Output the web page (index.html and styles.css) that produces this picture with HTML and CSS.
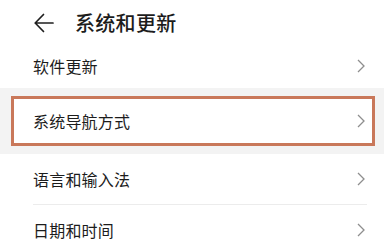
FILE: index.html
```html
<!DOCTYPE html>
<html lang="zh-CN">
<head>
<meta charset="utf-8">
<link rel="stylesheet" href="styles.css">
</head>
<body>
<header class="top">
  <svg class="back" width="20" height="20" viewBox="0 0 20 20" aria-hidden="true">
    <path d="M9.5 1.5 L1.2 10 L9.5 18.5 M1.2 10 H19" fill="none" stroke="#1f1f1f" stroke-width="1.7" stroke-linecap="round" stroke-linejoin="round"/>
  </svg>
  <h1 class="title">系统和更新</h1>
</header>
<ul class="list">
  <li class="row first">
    <span class="label">软件更新</span>
    <svg class="chev" width="8" height="14" viewBox="0 0 8 14"><path d="M1 1 L7 7 L1 13" fill="none" stroke="#8e8e8e" stroke-width="1.3"/></svg>
  </li>
  <li class="highlight">
    <div class="box">
      <span class="label">系统导航方式</span>
      <svg class="chev" width="8" height="14" viewBox="0 0 8 14"><path d="M1 1 L7 7 L1 13" fill="none" stroke="#8e8e8e" stroke-width="1.3"/></svg>
    </div>
  </li>
  <li class="row tall divided">
    <span class="label">语言和输入法</span>
    <svg class="chev" width="8" height="14" viewBox="0 0 8 14"><path d="M1 1 L7 7 L1 13" fill="none" stroke="#8e8e8e" stroke-width="1.3"/></svg>
  </li>
  <li class="row tall">
    <span class="label">日期和时间</span>
    <svg class="chev" width="8" height="14" viewBox="0 0 8 14"><path d="M1 1 L7 7 L1 13" fill="none" stroke="#8e8e8e" stroke-width="1.3"/></svg>
  </li>
</ul>
</body>
</html>
```
FILE: styles.css
```css
* { box-sizing: border-box; }
html, body { margin: 0; padding: 0; }
body {
  width: 384px;
  height: 248px;
  overflow: hidden;
  background: #ffffff;
  font-family: "Noto Sans CJK SC", "Noto Sans", sans-serif;
  color: #1c1c1c;
}
.top {
  height: 44px;
  display: flex;
  align-items: center;
  padding-left: 34px;
  padding-top: 1px;
}
.back { flex: none; }
.title {
  margin: 0 0 0 21px;
  font-size: 20px;
  font-weight: 500;
  line-height: 24px;
  letter-spacing: 0.3px;
}
.list {
  list-style: none;
  margin: 0;
  padding: 0;
}
.row {
  display: flex;
  align-items: center;
  justify-content: space-between;
  margin: 0 19px 0 33px;
  height: 44px;
}
.row.tall { height: 50px; }
.row.divided { height: 51px; border-bottom: 1px solid #ececec; margin-right: 17px; padding-right: 2px; }
.label {
  font-size: 16px;
  line-height: 20px;
  letter-spacing: 0.2px;
}
.chev { flex: none; }
.highlight {
  background: #f3f3f3;
  padding: 8px 9px 8px 11px;
}
.box {
  height: 50px;
  background: #ffffff;
  border: 3px solid #c9785a;
  display: flex;
  align-items: center;
  justify-content: space-between;
  padding: 0 7px 0 19px;
}
```
